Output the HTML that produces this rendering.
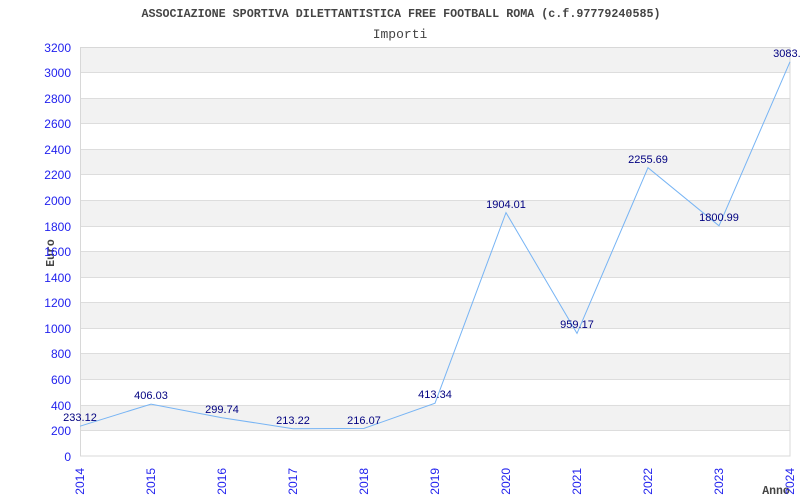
<!DOCTYPE html>
<html><head><meta charset="utf-8"><style>body{margin:0;background:#fff}svg{display:block}</style></head><body>
<svg width="800" height="500" xmlns="http://www.w3.org/2000/svg">
<rect width="800" height="500" fill="#fff"/>
<g fill="#f2f2f2">
<rect x="80" y="47" width="710" height="25.6"/>
<rect x="80" y="98.1" width="710" height="25.6"/>
<rect x="80" y="149.3" width="710" height="25.6"/>
<rect x="80" y="200.4" width="710" height="25.6"/>
<rect x="80" y="251.5" width="710" height="25.6"/>
<rect x="80" y="302.6" width="710" height="25.6"/>
<rect x="80" y="353.8" width="710" height="25.6"/>
<rect x="80" y="404.9" width="710" height="25.6"/>
</g>
<g stroke="#dddddd" stroke-width="1">
<line x1="80" x2="790" y1="72.5" y2="72.5"/><line x1="80" x2="790" y1="98.5" y2="98.5"/>
<line x1="80" x2="790" y1="123.5" y2="123.5"/><line x1="80" x2="790" y1="149.5" y2="149.5"/>
<line x1="80" x2="790" y1="174.5" y2="174.5"/><line x1="80" x2="790" y1="200.5" y2="200.5"/>
<line x1="80" x2="790" y1="226.5" y2="226.5"/><line x1="80" x2="790" y1="251.5" y2="251.5"/>
<line x1="80" x2="790" y1="277.5" y2="277.5"/><line x1="80" x2="790" y1="302.5" y2="302.5"/>
<line x1="80" x2="790" y1="328.5" y2="328.5"/><line x1="80" x2="790" y1="353.5" y2="353.5"/>
<line x1="80" x2="790" y1="379.5" y2="379.5"/><line x1="80" x2="790" y1="405.5" y2="405.5"/>
<line x1="80" x2="790" y1="430.5" y2="430.5"/>
</g>
<rect x="80.5" y="47.5" width="709.5" height="408.5" fill="none" stroke="#d8d8d8"/>
<g font-family="Liberation Mono, monospace" fill="#444" text-anchor="middle">
<text x="401" y="17" font-size="11.7" font-weight="bold">ASSOCIAZIONE SPORTIVA DILETTANTISTICA FREE FOOTBALL ROMA (c.f.97779240585)</text>
<text x="400" y="38" font-size="13">Importi</text>
<text x="776" y="494" font-size="11.5" font-weight="bold">Anno</text>
<text transform="translate(54,253) rotate(-90)" font-size="11.5" font-weight="bold">Euro</text>
</g>
<g font-family="Liberation Sans, sans-serif" font-size="12" fill="#2222ee" text-anchor="end">
<text x="71" y="52">3200</text><text x="71" y="77">3000</text><text x="71" y="103">2800</text>
<text x="71" y="128">2600</text><text x="71" y="154">2400</text><text x="71" y="179">2200</text>
<text x="71" y="205">2000</text><text x="71" y="231">1800</text><text x="71" y="256">1600</text>
<text x="71" y="282">1400</text><text x="71" y="307">1200</text><text x="71" y="333">1000</text>
<text x="71" y="358">800</text><text x="71" y="384">600</text><text x="71" y="410">400</text>
<text x="71" y="435">200</text><text x="71" y="461">0</text>
</g>
<g font-family="Liberation Sans, sans-serif" font-size="12" fill="#2222ee" text-anchor="end">
<text transform="translate(84,468) rotate(-90)">2014</text>
<text transform="translate(155,468) rotate(-90)">2015</text>
<text transform="translate(226,468) rotate(-90)">2016</text>
<text transform="translate(297,468) rotate(-90)">2017</text>
<text transform="translate(368,468) rotate(-90)">2018</text>
<text transform="translate(439,468) rotate(-90)">2019</text>
<text transform="translate(510,468) rotate(-90)">2020</text>
<text transform="translate(581,468) rotate(-90)">2021</text>
<text transform="translate(652,468) rotate(-90)">2022</text>
<text transform="translate(723,468) rotate(-90)">2023</text>
<text transform="translate(794,468) rotate(-90)">2024</text>
</g>
<polyline fill="none" stroke="#77b4f4" stroke-width="1" points="80,426.2 151,404.1 222,417.7 293,428.7 364,428.4 435,403.2 506,212.6 577,333.4 648,167.7 719,225.8 790,61.8"/>
<g font-family="Liberation Sans, sans-serif" font-size="11" fill="#000080" text-anchor="middle">
<text x="80" y="421">233.12</text><text x="151" y="399">406.03</text><text x="222" y="413">299.74</text>
<text x="293" y="424">213.22</text><text x="364" y="424">216.07</text><text x="435" y="398">413.34</text>
<text x="506" y="208">1904.01</text><text x="577" y="328">959.17</text><text x="648" y="163">2255.69</text>
<text x="719" y="221">1800.99</text><text x="790" y="57">3083.9</text>
</g>
</svg>
</body></html>
